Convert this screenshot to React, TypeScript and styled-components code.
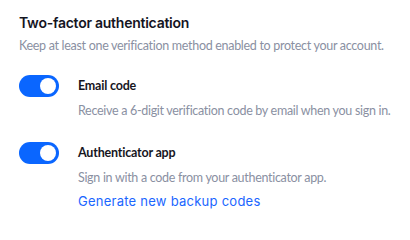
import React from "react";
import styled, { createGlobalStyle } from "styled-components";

const Global = createGlobalStyle`
  html, body { margin: 0; padding: 0; background: #ffffff; }
  body { font-family: "Lato", sans-serif; }
`;

const Panel = styled.section`
  padding: 13px 19px;
  display: flex;
  flex-direction: column;
`;

const Title = styled.h2`
  margin: 0;
  font-family: "Inter", sans-serif;
  font-weight: 600;
  font-size: 14px;
  letter-spacing: -0.25px;
  line-height: 20px;
  color: #15151f;
`;

const Subtitle = styled.p`
  margin: 4px 0 0;
  font-family: "Lato", sans-serif;
  font-size: 12.5px;
  letter-spacing: -0.3px;
  line-height: 18px;
  color: #8a90a2;
  white-space: nowrap;
`;

const List = styled.div`
  display: flex;
  flex-direction: column;
  gap: 22px;
  margin-top: 20px;
`;

const Row = styled.div`
  display: grid;
  grid-template-columns: 40px 1fr;
  column-gap: 19px;
  align-items: start;
`;

const Track = styled.span<{ $on: boolean }>`
  width: 40px;
  height: 22px;
  border-radius: 11px;
  background: ${(p) => (p.$on ? "#0a66ff" : "#c9ccd6")};
  display: flex;
  align-items: center;
  justify-content: ${(p) => (p.$on ? "flex-end" : "flex-start")};
  padding: 0 3px;
  box-sizing: border-box;
`;

const Knob = styled.span`
  width: 16px;
  height: 16px;
  border-radius: 50%;
  background: #ffffff;
`;

const Body = styled.div`
  display: flex;
  flex-direction: column;
`;

const Label = styled.div`
  font-family: "Lato", sans-serif;
  font-weight: 700;
  font-size: 12.5px;
  letter-spacing: -0.2px;
  line-height: 22px;
  color: #16161e;
`;

const Desc = styled.div`
  margin-top: 5px;
  font-family: "Lato", sans-serif;
  font-size: 12.5px;
  letter-spacing: -0.3px;
  line-height: 18px;
  color: #8a90a2;
  white-space: nowrap;
`;

const Link = styled.a`
  margin-top: 5px;
  font-family: "Inter", sans-serif;
  font-size: 13px;
  letter-spacing: 0.25px;
  line-height: 18px;
  color: #1a66ff;
  text-decoration: none;
`;

export default function App() {
  return (
    <>
      <Global />
      <Panel>
        <Title>Two-factor authentication</Title>
        <Subtitle>Keep at least one verification method enabled to protect your account.</Subtitle>
        <List>
          <Row>
            <Track $on><Knob /></Track>
            <Body>
              <Label>Email code</Label>
              <Desc>Receive a 6-digit verification code by email when you sign in.</Desc>
            </Body>
          </Row>
          <Row>
            <Track $on><Knob /></Track>
            <Body>
              <Label>Authenticator app</Label>
              <Desc>Sign in with a code from your authenticator app.</Desc>
              <Link href="#">Generate new backup codes</Link>
            </Body>
          </Row>
        </List>
      </Panel>
    </>
  );
}
